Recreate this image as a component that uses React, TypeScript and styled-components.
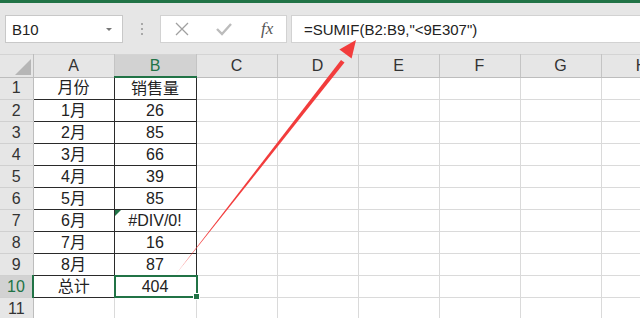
import React from "react";
import styled, { createGlobalStyle } from "styled-components";

const GlobalStyle = createGlobalStyle`
  html, body {
    margin: 0;
    padding: 0;
    background: #e6e6e6;
    overflow: hidden;
  }
  body {
    font-family: "Liberation Sans", "Noto Sans CJK SC", sans-serif;
    color: #222;
  }
`;

const Page = styled.div`
  position: relative;
  width: 640px;
  height: 318px;
  overflow: hidden;
  background: #e6e6e6;
`;

const TopStripe = styled.div`
  height: 3px;
  background: #217346;
`;

const FormulaBar = styled.div`
  display: flex;
  align-items: center;
  height: 28px;
  padding: 12px 0 11px 5px;
`;

const NameBox = styled.div`
  box-sizing: border-box;
  width: 118px;
  height: 28px;
  background: #fff;
  border: 1px solid #c8c8c8;
  display: flex;
  align-items: center;
  justify-content: space-between;
  padding: 0 10px 0 6px;
  font-size: 15px;
  color: #222;
`;

const Caret = styled.span`
  width: 0;
  height: 0;
  border-left: 3px solid transparent;
  border-right: 3px solid transparent;
  border-top: 3px solid #777;
`;

const Grip = styled.div`
  width: 37px;
  display: flex;
  flex-direction: column;
  align-items: center;
  gap: 3px;
  span {
    width: 2px;
    height: 2px;
    background: #a8a8a8;
  }
`;

const IconBox = styled.div`
  box-sizing: border-box;
  width: 127px;
  height: 28px;
  background: #fff;
  border: 1px solid #d2d2d2;
  display: flex;
  align-items: center;
  padding-left: 14px;
  gap: 27px;
`;

const Fx = styled.span`
  font-family: "Liberation Serif", serif;
  font-style: italic;
  font-size: 17px;
  color: #555;
  margin-left: 2px;
`;

const FormulaInput = styled.div`
  box-sizing: border-box;
  flex: 1;
  height: 28px;
  margin-left: 4px;
  background: #fff;
  border: 1px solid #d2d2d2;
  border-right: none;
  display: flex;
  align-items: center;
  padding-left: 12px;
  font-size: 15px;
  color: #222;
  white-space: nowrap;
`;

const Sheet = styled.table`
  border-collapse: collapse;
  table-layout: fixed;
  width: 682px;
  background: #fff;
  font-size: 16px;
  line-height: 20px;
`;

const HeadCell = styled.th<{ $active?: boolean }>`
  height: 21px;
  padding: 0;
  font-weight: normal;
  text-align: center;
  background: ${(p) => (p.$active ? "#d2d2d2" : "#e6e6e6")};
  color: ${(p) => (p.$active ? "#217346" : "#333")};
  border-top: 1px solid #d4d4d4;
  border-right: 1px solid #c4c4c4;
  border-bottom: ${(p) => (p.$active ? "2px solid #217346" : "1px solid #bdbdbd")};
`;

const Corner = styled.th`
  padding: 0;
  background: #e6e6e6;
  border-top: 1px solid #d4d4d4;
  border-right: 1px solid #bdbdbd;
  border-bottom: 1px solid #bdbdbd;
`;

const CornerTriangle = styled.div`
  margin: 2px 2px 0 auto;
  width: 0;
  height: 0;
  border-left: 16px solid transparent;
  border-bottom: 16px solid #b6b6b6;
`;

const RowHead = styled.td<{ $active?: boolean }>`
  height: 21px;
  padding: 0;
  text-align: center;
  background: ${(p) => (p.$active ? "#d2d2d2" : "#e6e6e6")};
  color: ${(p) => (p.$active ? "#217346" : "#333")};
  border-bottom: 1px solid #d0d0d0;
  border-right: ${(p) => (p.$active ? "2px solid #217346" : "1px solid #bdbdbd")};
`;

const Cell = styled.td<{ $boxed?: boolean }>`
  position: relative;
  height: 21px;
  padding: 0;
  text-align: center;
  color: #222;
  white-space: nowrap;
  border: 1px solid ${(p) => (p.$boxed ? "#2a2a2a" : "#dadada")};
`;

const ErrorFlag = styled.span`
  position: absolute;
  left: 0;
  top: 0;
  width: 0;
  height: 0;
  border-top: 6px solid #217346;
  border-right: 6px solid transparent;
`;

const Selection = styled.span`
  position: absolute;
  left: -1px;
  top: -1px;
  right: -2px;
  bottom: -1px;
  border: 2px solid #217346;
  pointer-events: none;
  &::after {
    content: "";
    position: absolute;
    right: -4px;
    bottom: -4px;
    width: 5px;
    height: 5px;
    background: #217346;
    border: 1px solid #fff;
  }
`;

const Overlay = styled.svg`
  position: absolute;
  left: 0;
  top: 0;
  pointer-events: none;
`;

const columns = ["A", "B", "C", "D", "E", "F", "G", "H"];
const colWidths = [81, 82, 81, 81, 81, 81, 81, 81];

const data: [string, string][] = [
  ["月份", "销售量"],
  ["1月", "26"],
  ["2月", "85"],
  ["3月", "66"],
  ["4月", "39"],
  ["5月", "85"],
  ["6月", "#DIV/0!"],
  ["7月", "16"],
  ["8月", "87"],
  ["总计", "404"],
];

export default function App() {
  const rows = Array.from({ length: 11 }, (_, i) => i + 1);
  return (
    <Page>
      <GlobalStyle />
      <TopStripe />
      <FormulaBar>
        <NameBox>
          B10
          <Caret />
        </NameBox>
        <Grip>
          <span />
          <span />
          <span />
        </Grip>
        <IconBox>
          <svg width="14" height="14" viewBox="0 0 14 14">
            <path d="M1 1 L13 13 M13 1 L1 13" stroke="#a0a0a0" strokeWidth="1.3" fill="none" />
          </svg>
          <svg width="16" height="14" viewBox="0 0 16 14">
            <path d="M1 7 L6 12 L15 2" stroke="#bcbcbc" strokeWidth="2.4" fill="none" />
          </svg>
          <Fx>fx</Fx>
        </IconBox>
        <FormulaInput>=SUMIF(B2:B9,"&lt;9E307")</FormulaInput>
      </FormulaBar>
      <Sheet>
        <colgroup>
          <col style={{ width: 33 }} />
          {colWidths.map((w, i) => (
            <col key={i} style={{ width: w }} />
          ))}
        </colgroup>
        <thead>
          <tr>
            <Corner>
              <CornerTriangle />
            </Corner>
            {columns.map((c) => (
              <HeadCell key={c} $active={c === "B"}>
                {c}
              </HeadCell>
            ))}
          </tr>
        </thead>
        <tbody>
          {rows.map((r) => {
            const rowData = data[r - 1];
            return (
              <tr key={r}>
                <RowHead $active={r === 10}>{r}</RowHead>
                {columns.map((c, ci) => {
                  const boxed = !!rowData && ci < 2;
                  const value = boxed ? rowData[ci] : "";
                  return (
                    <Cell key={c} $boxed={boxed}>
                      {r === 7 && c === "B" && <ErrorFlag />}
                      {value}
                      {r === 10 && c === "B" && <Selection />}
                    </Cell>
                  );
                })}
              </tr>
            );
          })}
        </tbody>
      </Sheet>
      <Overlay width="640" height="318" viewBox="0 0 640 318">
        <polygon points="176,274 341,60 344.5,62.6" fill="#f23c3c" />
        <polygon points="356,40 351.6,58.5 339.4,49.5" fill="#f23c3c" />
      </Overlay>
    </Page>
  );
}
